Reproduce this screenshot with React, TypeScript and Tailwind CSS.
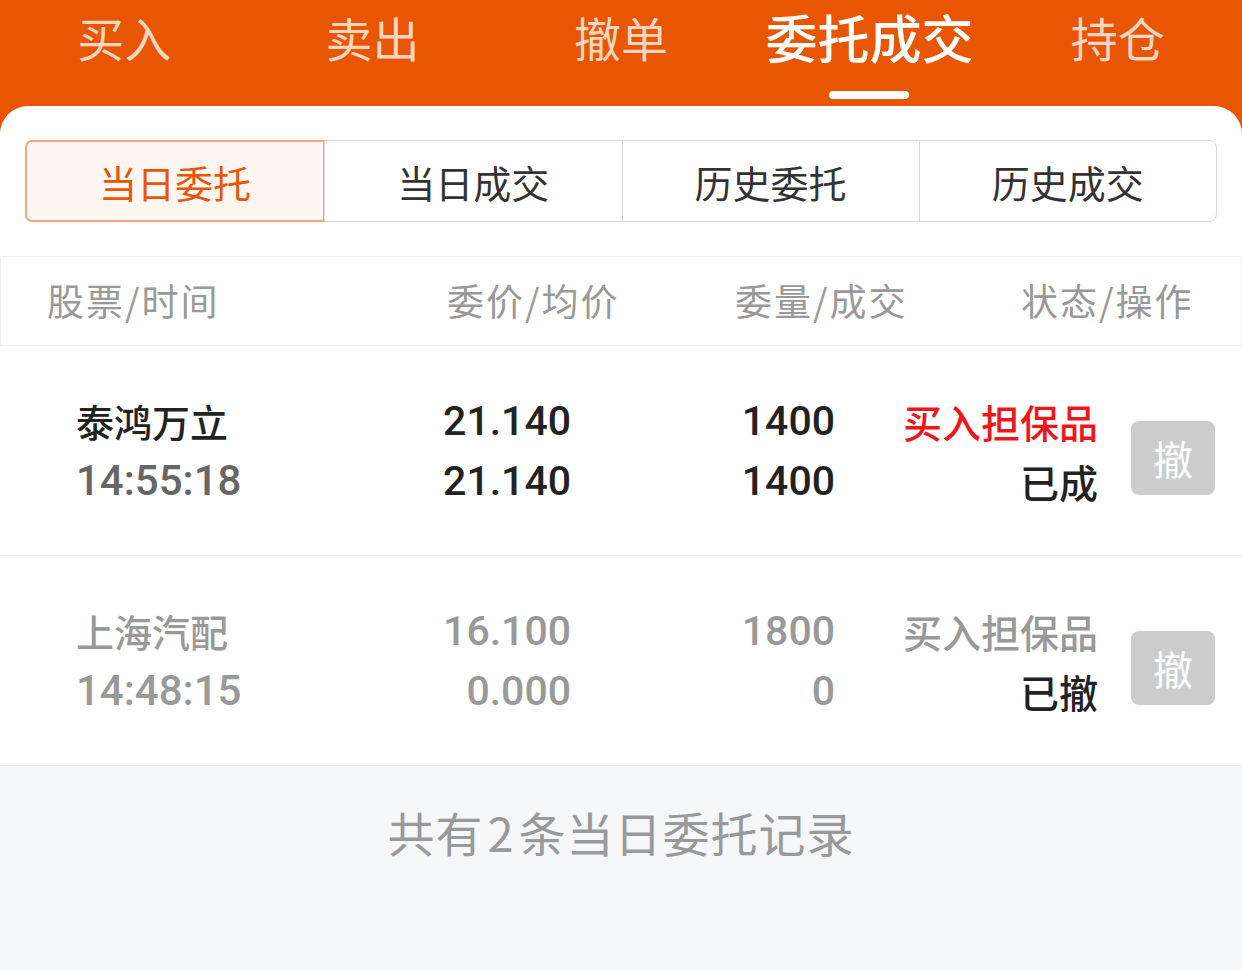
import React from "react";

const topTabs = ["买入", "卖出", "撤单", "委托成交", "持仓"];
const subTabs = ["当日委托", "当日成交", "历史委托", "历史成交"];

const orders = [
  {
    name: "泰鸿万立",
    time: "14:55:18",
    price: "21.140",
    avg: "21.140",
    qty: "1400",
    deal: "1400",
    type: "买入担保品",
    status: "已成",
    done: false,
  },
  {
    name: "上海汽配",
    time: "14:48:15",
    price: "16.100",
    avg: "0.000",
    qty: "1800",
    deal: "0",
    type: "买入担保品",
    status: "已撤",
    done: true,
  },
];

const cjk = "font-['Noto_Sans_CJK_SC',sans-serif]";
const num = "font-['Roboto','Noto_Sans_CJK_SC',sans-serif]";

export default function App() {
  return (
    <div className={`w-[1242px] h-[970px] bg-[#e85503] flex flex-col ${cjk}`}>
      {/* top tabs */}
      <div className="flex h-[106px]">
        {topTabs.map((t, i) => {
          const active = i === 3;
          return (
            <div key={t} className="flex-1 flex flex-col items-center">
              <div
                className={
                  active
                    ? "mt-[6px] text-[52px] leading-[62px] font-medium text-white"
                    : "mt-[8px] text-[47px] leading-[58px] text-[#fcd6c0]"
                }
              >
                {t}
              </div>
              {active && <div className="mt-[23px] w-[80px] h-[8px] rounded-full bg-white" />}
            </div>
          );
        })}
      </div>

      {/* card */}
      <div className="flex-1 bg-white rounded-t-[28px] flex flex-col overflow-hidden">
        <div className="pt-[34px] px-[25px]">
          <div className="flex h-[82px] border border-[#d6d8dc] rounded-[8px]">
            {subTabs.map((t, i) => {
              const active = i === 0;
              return (
                <div
                  key={t}
                  className={
                    active
                      ? "flex-1 flex items-center justify-center text-[38px] text-[#e85503] bg-[#fff5f1] border-2 border-[#f4a783] rounded-l-[7px] -m-px"
                      : "flex-1 flex items-center justify-center text-[38px] text-[#333333] border-l border-[#d6d8dc] first:border-l-0"
                  }
                >
                  {t}
                </div>
              );
            })}
          </div>
        </div>

        {/* table header */}
        <div className="mt-[34px] flex items-center h-[90px] border border-[#eeeeee] text-[37px] text-[#999999] tracking-[2px]">
          <div className="w-[446px] pl-[46px]">股票/时间</div>
          <div className="w-[288px]">委价/均价</div>
          <div className="w-[286px]">委量/成交</div>
          <div>状态/操作</div>
        </div>

        {/* rows */}
        {orders.map((o) => {
          const main = o.done ? "text-[#999999]" : "text-[#222222]";
          return (
            <div key={o.name} className="flex items-center h-[210px] border-b border-[#eeeeee] pl-[76px]">
              <div className="w-[300px] flex flex-col gap-[8px]">
                <div className={`text-[38px] leading-[52px] font-medium ${main}`}>{o.name}</div>
                <div className={`${num} text-[42px] leading-[52px] font-medium ${o.done ? "text-[#999999]" : "text-[#666666]"}`}>
                  {o.time}
                </div>
              </div>
              <div className={`${num} w-[195px] flex flex-col gap-[8px] items-end text-[41px] leading-[52px] font-medium ${main}`}>
                <div>{o.price}</div>
                <div>{o.avg}</div>
              </div>
              <div className={`${num} w-[264px] flex flex-col gap-[8px] items-end text-[41px] leading-[52px] font-medium ${main}`}>
                <div>{o.qty}</div>
                <div>{o.deal}</div>
              </div>
              <div className="w-[263px] flex flex-col gap-[8px] items-end text-[39px] leading-[52px] font-medium">
                <div className={o.done ? "text-[#999999]" : "text-[#f0161e]"}>{o.type}</div>
                <div className="text-[#222222]">{o.status}</div>
              </div>
              <div className="ml-[33px] mt-[14px] w-[84px] h-[74px] rounded-[8px] bg-[#cccccc] flex items-center justify-center text-[40px] text-white">
                撤
              </div>
            </div>
          );
        })}

        {/* footer */}
        <div className="flex-1 bg-[#f6f7f9] flex justify-center pt-[36px]">
          <div className="text-[47px] leading-[60px] text-[#999999] tracking-[1px]">
            共有<span className="px-[4px]">2</span>条当日委托记录
          </div>
        </div>
      </div>
    </div>
  );
}
